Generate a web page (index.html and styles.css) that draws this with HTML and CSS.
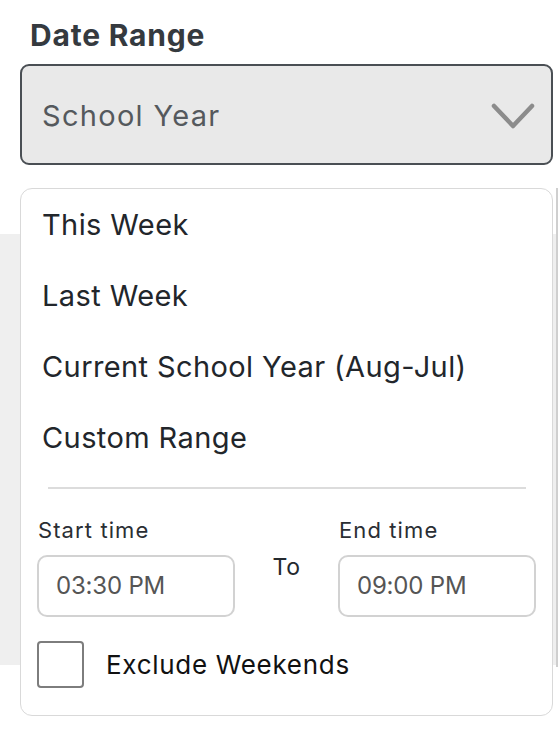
FILE: index.html
```html
<!DOCTYPE html>
<html lang="en">
<head>
    <meta charset="UTF-8">
    <meta name="viewport" content="width=device-width, initial-scale=1.0">
    <title>Date Range</title>
    <link rel="stylesheet" href="styles.css">
</head>
<body>
    <div class="filter">
        <h2 class="filter-label">Date Range</h2>
        <div class="select">
            <span class="select-value">School Year</span>
            <svg class="select-arrow" width="48" height="30" viewBox="0 0 48 30">
                <path d="M5 4 L24 24 L43 4" fill="none" stroke="#8c8c8c" stroke-width="4.5" stroke-linecap="round" stroke-linejoin="round"/>
            </svg>
        </div>

        <div class="menu">
            <ul class="menu-options">
                <li>This Week</li>
                <li>Last Week</li>
                <li>Current School Year (Aug-Jul)</li>
                <li>Custom Range</li>
            </ul>
            <hr class="menu-divider">
            <div class="time-row">
                <div class="time-field">
                    <label class="time-label">Start time</label>
                    <div class="time-input">03:30 PM</div>
                </div>
                <span class="time-sep">To</span>
                <div class="time-field">
                    <label class="time-label">End time</label>
                    <div class="time-input">09:00 PM</div>
                </div>
            </div>
            <label class="check">
                <span class="check-box"></span>
                <span>Exclude Weekends</span>
            </label>
        </div>
    </div>

    <section class="page">
        <div class="page-card">
            <div class="card-bar"></div>
            <div class="card-bar second"></div>
            <div class="card-foot"></div>
        </div>
    </section>
</body>
</html>
```

FILE: styles.css
```css
html, body {
    min-height: 100vh;
}

body {
    margin: 0;
    font-family: Inter, "Liberation Sans", sans-serif;
    background: #fff;
}

.filter {
    position: relative;
    z-index: 2;
    padding: 19px 5px 0 20px;
}

.filter-label {
    margin: 0 0 12px 10px;
    font-size: 30px;
    line-height: 33px;
    font-weight: 700;
    letter-spacing: 0.8px;
    color: #353a3f;
}

.select {
    display: flex;
    align-items: center;
    justify-content: space-between;
    height: 97px;
    padding: 0 14px 0 20px;
    border: 2px solid #4a4f54;
    border-radius: 9px;
    background: #e9e9e9;
}

.select-value {
    font-size: 29px;
    letter-spacing: 1.3px;
    color: #55595d;
    padding-top: 2px;
}

.select-arrow {
    display: block;
    margin-top: 4px;
}

/* dropdown panel, opens over the page below */
.menu {
    position: absolute;
    top: 188px;
    left: 20px;
    width: 533px;
    padding: 0 16px 27px;
    box-sizing: border-box;
    border: 1.5px solid #d9d9d9;
    border-radius: 12px;
    background: #fff;
}

.menu-options {
    list-style: none;
    margin: 0;
    padding: 0 0 0 5px;
}

.menu-options li {
    font-size: 29px;
    line-height: 71px;
    letter-spacing: 0.4px;
    color: #22262b;
}

.menu-divider {
    margin: 14px 10px 28px 11px;
    border: 0;
    height: 2px;
    background: #dcdcdc;
}

.time-row {
    display: flex;
    align-items: center;
    justify-content: space-between;
}

.time-field {
    width: 198px;
}

.time-label {
    display: block;
    font-size: 22px;
    line-height: 26px;
    letter-spacing: 1.1px;
    color: #2a2e33;
    margin-bottom: 12px;
    padding-left: 1px;
}

.time-input {
    height: 58px;
    line-height: 58px;
    padding-left: 17px;
    border: 2px solid #d2d2d2;
    border-radius: 10px;
    font-size: 24px;
    letter-spacing: -0.2px;
    color: #555;
}

.time-sep {
    font-size: 23px;
    letter-spacing: 0.5px;
    color: #24292e;
}

.check {
    display: flex;
    align-items: center;
    gap: 22px;
    margin-top: 24px;
    font-size: 26px;
    letter-spacing: 0.7px;
    color: #111;
}

.check-box {
    width: 43px;
    height: 43px;
    border: 2px solid #7d7d7d;
    border-radius: 4px;
}

/* page content behind the panel */
.page {
    display: flex;
    justify-content: flex-end;
    margin-top: 69px;
    height: 431px;
    background: #efefef;
}

.page-card {
    display: flex;
    flex-direction: column;
    width: 2px;
    margin-top: -46px;
    height: 479px;
    border-left: 2px solid #cfcfcf;
    background: #fff;
    padding-top: 274px;
    box-sizing: border-box;
}

.card-bar {
    height: 44px;
    background: #4fae5a;
}

.card-bar.second {
    margin-top: 6px;
    height: 53px;
}

.card-foot {
    flex: 1;
    background: #ececec;
}
```
